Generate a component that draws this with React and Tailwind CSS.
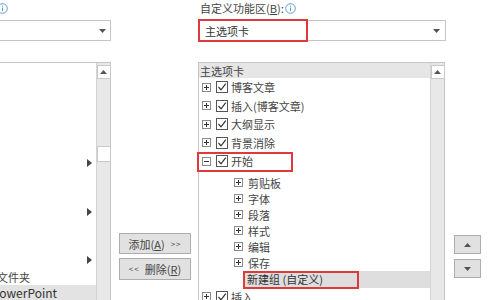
import React from "react";

const TEXT = "text-[#444]";

function Info() {
  return (
    <svg width="11" height="11" viewBox="0 0 11 11" className="shrink-0">
      <circle cx="5.5" cy="5.5" r="4.8" fill="none" stroke="#5b9bd5" strokeWidth="1" />
      <rect x="5" y="4.5" width="1.1" height="3.6" fill="#5b9bd5" />
      <rect x="5" y="2.6" width="1.1" height="1.1" fill="#5b9bd5" />
    </svg>
  );
}

function Caret({ up }) {
  return (
    <svg width="7" height="4" viewBox="0 0 7 4">
      <path d={up ? "M0 4 L3.5 0 L7 4 Z" : "M0 0 L7 0 L3.5 4 Z"} fill="#555" />
    </svg>
  );
}

function Expander({ open }) {
  return (
    <span className="flex h-[9px] w-[9px] shrink-0 items-center justify-center border border-[#8a8a8a] bg-white">
      <svg width="7" height="7" viewBox="0 0 7 7">
        <rect x="1" y="3" width="5" height="1" fill="#333" />
        {!open && <rect x="3" y="1" width="1" height="5" fill="#333" />}
      </svg>
    </span>
  );
}

function Check() {
  return (
    <span className="flex h-[12px] w-[12px] shrink-0 items-center justify-center border border-[#555] bg-white">
      <svg width="10" height="10" viewBox="0 0 10 10">
        <path d="M1.5 5 L4 7.8 L8.8 1.6" fill="none" stroke="#333" strokeWidth="1.2" />
      </svg>
    </span>
  );
}

function TopRow({ label, open, children }) {
  return (
    <div className="relative flex h-[18.5px] shrink-0 items-center">
      <span className="ml-[3px]"><Expander open={open} /></span>
      <span className="ml-[5px]"><Check /></span>
      <span className="ml-[3px] whitespace-nowrap leading-[14px]">{label}</span>
      {children}
    </div>
  );
}

function SubRow({ label }) {
  return (
    <div className="flex h-[16px] shrink-0 items-center">
      <span className="ml-[35px]"><Expander /></span>
      <span className="ml-[5px] whitespace-nowrap leading-[14px]">{label}</span>
    </div>
  );
}

function Scrollbar({ thumb }) {
  return (
    <div className="flex w-[14px] shrink-0 flex-col items-center border-l border-[#d4d4d4] bg-[#e8e8e8]">
      <div className="mt-[2px] flex h-[14px] w-[14px] shrink-0 items-center justify-center border border-[#c9c9c9] bg-white">
        <Caret up />
      </div>
      {thumb && <div className="mt-[67px] h-[16px] w-[14px] shrink-0 border border-[#c9c9c9] bg-white" />}
    </div>
  );
}

function Btn({ children, className = "" }) {
  return (
    <div className={`flex shrink-0 items-center justify-center border border-[#adadad] bg-[#e1e1e1] ${className}`}>
      {children}
    </div>
  );
}

function Arrow() {
  return (
    <svg width="5" height="8" viewBox="0 0 5 8">
      <path d="M0 0 L5 4 L0 8 Z" fill="#444" />
    </svg>
  );
}

export default function App() {
  return (
    <div className={`flex h-[300px] w-[500px] overflow-hidden bg-white text-[11px] ${TEXT} font-['Noto_Sans_CJK_SC','Microsoft_YaHei',sans-serif]`}>
      {/* left column */}
      <div className="flex w-[112px] shrink-0 flex-col">
        <div className="flex h-[20px] shrink-0 items-center pb-[4px]">
          <span className="-ml-[3px]"><Info /></span>
        </div>
        <div className="flex h-[21px] w-[111px] shrink-0 items-center justify-end border border-l-0 border-[#c5c5c5] pr-[4px]">
          <Caret />
        </div>
        <div className="mt-[21px] flex h-[260px] w-[111px] shrink-0 border border-l-0 border-[#c5c5c5]">
          <div className="flex flex-1 flex-col overflow-hidden">
            <div className="ml-auto mr-[4px] mt-[93px] flex h-[14px] shrink-0 items-center"><Arrow /></div>
            <div className="ml-auto mr-[4px] mt-[35px] flex h-[14px] shrink-0 items-center"><Arrow /></div>
            <div className="ml-auto mr-[4px] mt-[34px] flex h-[14px] shrink-0 items-center"><Arrow /></div>
            <div className="mt-[3px] flex h-[14px] shrink-0 items-center whitespace-nowrap">
              <span className="-ml-[3px] leading-[14px]">文件夹</span>
            </div>
            <div className="mt-[1px] flex h-[16px] shrink-0 items-center whitespace-nowrap bg-[#e3e3e3]">
              <span className="-ml-[8px] text-[12px] leading-[14px] text-[#333]">PowerPoint</span>
            </div>
          </div>
          <Scrollbar thumb />
        </div>
      </div>

      {/* middle buttons */}
      <div className="flex w-[86px] shrink-0 flex-col pl-[7px] pt-[233px]">
        <Btn className="h-[21px] w-[72px] gap-[6px]">
          <span className="leading-[14px]">添加(<span className="underline">A</span>)</span>
          <span className="text-[8px] tracking-[1px]">&gt;&gt;</span>
        </Btn>
        <Btn className="mt-[4px] h-[22px] w-[72px] gap-[5px]">
          <span className="text-[8px] tracking-[1px]">&lt;&lt;</span>
          <span className="leading-[14px]">删除(<span className="underline">R</span>)</span>
        </Btn>
      </div>

      {/* right column */}
      <div className="flex w-[248px] shrink-0 flex-col">
        <div className="flex h-[20px] shrink-0 items-center gap-[1px] pb-[4px] pl-[2px]">
          <span className="whitespace-nowrap leading-[14px]">自定义功能区(<span className="underline">B</span>):</span>
          <Info />
        </div>
        <div className="relative flex h-[21px] shrink-0 items-center justify-between border border-[#c5c5c5] pl-[6px] pr-[5px]">
          <span className="leading-[14px] text-[#333]">主选项卡</span>
          <Caret />
          <div className="absolute -left-[1px] -top-[2px] h-[23px] w-[110px] border-2 border-[#e0393c]" />
        </div>
        <div className="mt-[21px] flex h-[260px] w-[247px] shrink-0 border border-[#c5c5c5]">
          <div className="flex flex-1 flex-col">
            <div className="flex h-[15px] shrink-0 items-center bg-[#e6e6e6] pl-[1px]">
              <span className="leading-[14px]">主选项卡</span>
            </div>
            <TopRow label="博客文章" />
            <TopRow label="插入(博客文章)" />
            <TopRow label="大纲显示" />
            <TopRow label="背景消除" />
            <TopRow label="开始" open>
              <div className="absolute -left-[2px] top-[0px] h-[20px] w-[96px] border-2 border-[#e0393c]" />
            </TopRow>
            <div className="mt-[4px] flex shrink-0 flex-col">
              <SubRow label="剪贴板" />
              <SubRow label="字体" />
              <SubRow label="段落" />
              <SubRow label="样式" />
              <SubRow label="编辑" />
              <SubRow label="保存" />
              <div className="relative ml-[46px] flex h-[17px] shrink-0 items-center bg-[#dedede] pl-[2px]">
                <span className="whitespace-nowrap leading-[14px] text-[#333]">新建组 (自定义)</span>
                <div className="absolute -left-[2px] top-0 h-[18px] w-[116px] border-2 border-[#e0393c]" />
              </div>
            </div>
            <TopRow label="插入" />
          </div>
          <Scrollbar />
        </div>
      </div>

      {/* far right buttons */}
      <div className="flex flex-1 flex-col pl-[8px] pt-[235px]">
        <Btn className="h-[19px] w-[27px]"><Caret up /></Btn>
        <Btn className="mt-[5px] h-[19px] w-[27px]"><Caret /></Btn>
      </div>
    </div>
  );
}
